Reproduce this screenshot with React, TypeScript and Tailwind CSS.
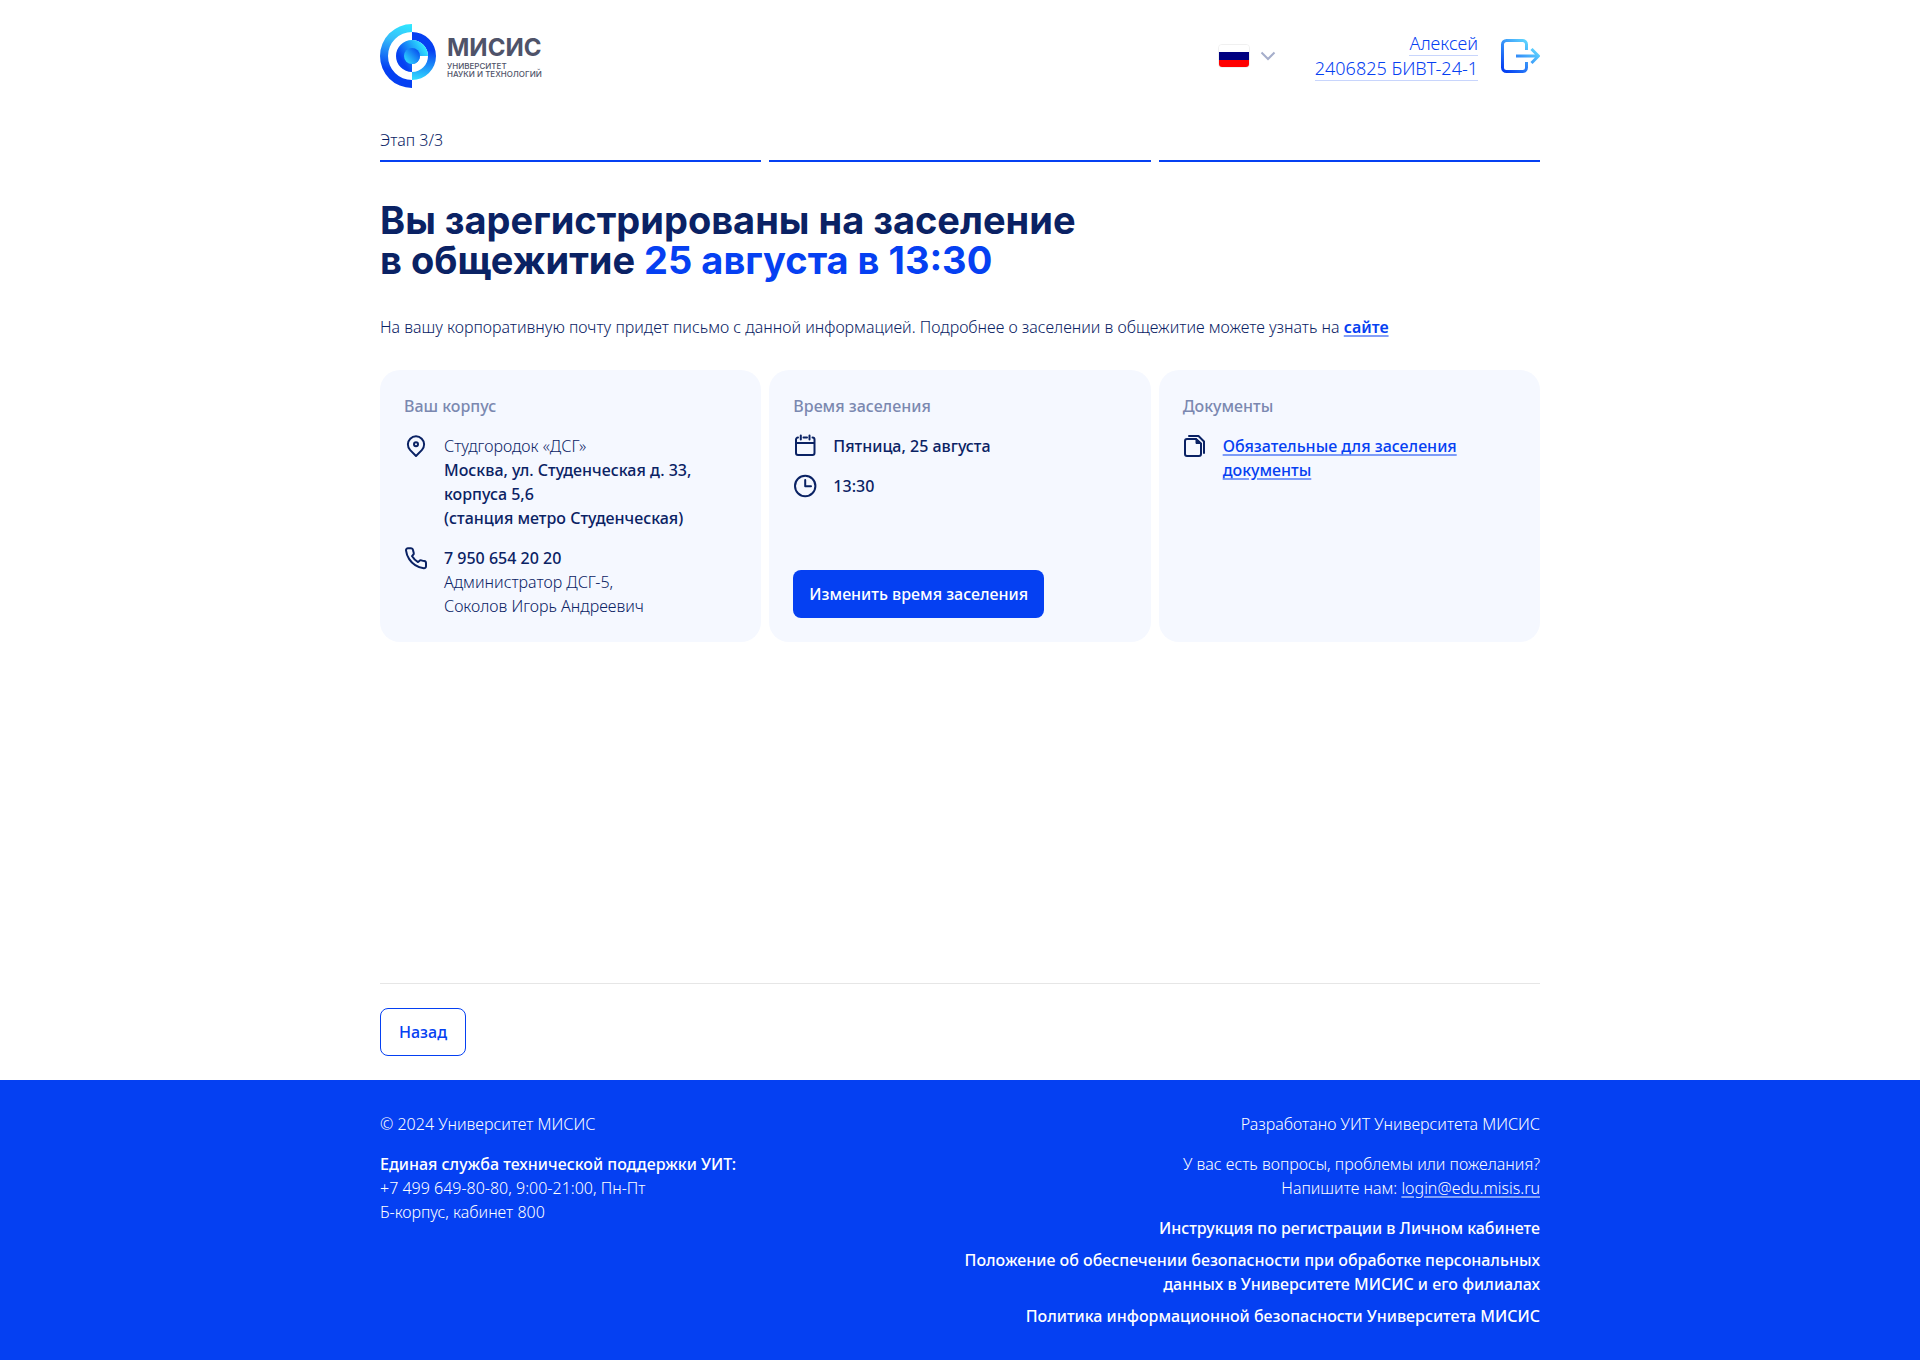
import type { ReactNode } from 'react';

function LogoMark() {
  return (
    <svg className="h-16 w-[56px] shrink-0" viewBox="0 0 56 64" fill="none" aria-hidden="true">
      <defs>
        <linearGradient id="outer" x1="32" y1="0" x2="14" y2="64" gradientUnits="userSpaceOnUse">
          <stop stopColor="#2FEAFF" />
          <stop offset="0.3" stopColor="#35BDFA" />
          <stop offset="0.75" stopColor="#0540F2" />
        </linearGradient>
        <linearGradient id="right" x1="44" y1="8" x2="36" y2="56" gradientUnits="userSpaceOnUse">
          <stop offset="0.35" stopColor="#0540F2" />
          <stop offset="1" stopColor="#33DDFF" />
        </linearGradient>
        <linearGradient id="inner" x1="46" y1="26" x2="20" y2="42" gradientUnits="userSpaceOnUse">
          <stop stopColor="#2FE3FF" />
          <stop offset="0.85" stopColor="#0540F2" />
        </linearGradient>
        <linearGradient id="core" x1="26" y1="38" x2="38" y2="27" gradientUnits="userSpaceOnUse">
          <stop stopColor="#2FD8FF" />
          <stop offset="1" stopColor="#0A55F0" />
        </linearGradient>
      </defs>
      <path d="M32 0a32 32 0 0 0 0 64v-8a24 24 0 0 1 0-48z" fill="url(#outer)" />
      <path d="M32 8a24 24 0 0 1 0 48v-8a16 16 0 0 0 0-32z" fill="url(#right)" />
      <path d="M32 48a16 16 0 1 1 16-16h-8a8 8 0 0 1-8 8z" fill="url(#inner)" />
      <circle cx="32" cy="32" r="8" fill="url(#core)" />
    </svg>
  );
}

function Icon({ children }: { children: ReactNode }) {
  return (
    <svg
      className="size-6 shrink-0"
      viewBox="0 0 24 24"
      fill="none"
      stroke="currentColor"
      strokeWidth="2"
      strokeLinecap="round"
      strokeLinejoin="round"
      aria-hidden="true"
    >
      {children}
    </svg>
  );
}

function PinIcon() {
  return (
    <Icon>
      <path d="M12 22 6.2 16.1a8.1 8.1 0 1 1 11.6 0z" />
      <circle cx="12" cy="10.3" r="2" />
    </Icon>
  );
}

function PhoneIcon() {
  return (
    <Icon>
      <path d="M22 17.2v3a2 2 0 0 1-2.2 2 19.8 19.8 0 0 1-8.6-3.1 19.5 19.5 0 0 1-6-6A19.8 19.8 0 0 1 2 4.4 2 2 0 0 1 4 2.2h3a2 2 0 0 1 2 1.7c.1 1 .4 1.9.7 2.8a2 2 0 0 1-.5 2.1L8 10.1a16 16 0 0 0 6 6l1.3-1.2a2 2 0 0 1 2.1-.5c.9.3 1.8.6 2.8.7a2 2 0 0 1 1.8 2.1z" />
    </Icon>
  );
}

function CalendarIcon() {
  return (
    <Icon>
      <path d="M5 3.500a2 2 0 0 0-2 2V19a2 2 0 0 0 2 2h14.500a2 2 0 0 0 2-2V5.500a2 2 0 0 0-2-2M10.500 3.500h3.500M7.800 1.500v4M16.500 1.500v4M3 9h18" />
    </Icon>
  );
}

function ClockIcon() {
  return (
    <Icon>
      <circle cx="12.200" cy="12" r="10.200" />
      <path d="M12.200 6v6.200H18" />
    </Icon>
  );
}

function DocumentsIcon() {
  return (
    <Icon>
      <path d="M13 5H4a2 2 0 0 0-2 2v13a2 2 0 0 0 2 2h12a2 2 0 0 0 2-2V9.500z" />
      <path d="M13 5v4.500h5z" fill="currentColor" strokeWidth="1" />
      <path d="M6 2h9.500L21 7.500V19" />
    </Icon>
  );
}

function LogoutIcon() {
  return (
    <svg className="size-10" viewBox="0 0 40 40" fill="none" aria-hidden="true">
      <defs>
        <linearGradient id="exit" x1="3" y1="33" x2="28" y2="4" gradientUnits="userSpaceOnUse">
          <stop stopColor="#0540F2" />
          <stop offset="1" stopColor="#63DCFF" />
        </linearGradient>
      </defs>
      <path
        d="M26.500 14V8.500a4 4 0 0 0-4-4H6.500a4 4 0 0 0-4 4v23a4 4 0 0 0 4 4h16a4 4 0 0 0 4-4V26M16 20h22M31.500 13l7 7-7 7"
        stroke="url(#exit)"
        strokeWidth="3"
      />
    </svg>
  );
}

function Header() {
  return (
    <header className="mx-auto flex w-full max-w-[1200px] items-center justify-between px-5 py-6">
      <a href="#" className="flex items-center gap-[11px]" aria-label="Университет МИСИС">
        <LogoMark />
        <span className="flex flex-col font-['Inter',sans-serif] text-[#4F5369]">
          <span className="text-2xl leading-7 font-bold">МИСИС</span>
          <span className="text-[8px] leading-2 font-medium">
            УНИВЕРСИТЕТ
            <br />
            НАУКИ И ТЕХНОЛОГИЙ
          </span>
        </span>
      </a>
      <div className="flex items-center">
        <button type="button" className="mr-[34px] flex items-center gap-2.5" aria-label="Язык: русский">
          <span className="flex h-6 w-8 flex-col overflow-hidden rounded border border-[#F0F0F0]">
            <span className="flex-1 bg-white" />
            <span className="flex-1 bg-[#000080]" />
            <span className="flex-1 bg-[#FF0000]" />
          </span>
          <svg className="h-4 w-4" viewBox="0 0 16 16" fill="none" stroke="#A5AECB" strokeWidth="2" aria-hidden="true">
            <path d="m1.500 4.500 6.500 6.500 6.500-6.500" />
          </svg>
        </button>
        <a href="#" className="mr-[22px] min-w-[168px] text-right text-lg leading-[25px] font-light text-[#0540F2]">
          <span className="border-b border-[#C8D5FC]">Алексей</span>
          <br />
          <span className="border-b border-[#C8D5FC]">2406825 БИВТ-24-1</span>
        </a>
        <button type="button" aria-label="Выйти">
          <LogoutIcon />
        </button>
      </div>
    </header>
  );
}

function Card({ title, children }: { title: string; children: ReactNode }) {
  return (
    <section className="flex flex-col gap-4 rounded-[20px] bg-[#F5F8FF] p-6">
      <h2 className="font-medium text-[#7B88B0]">{title}</h2>
      {children}
    </section>
  );
}

function Row({ icon, children }: { icon: ReactNode; children: ReactNode }) {
  return (
    <div className="flex gap-4">
      {icon}
      <div>{children}</div>
    </div>
  );
}

function Footer() {
  return (
    <footer className="bg-[#0540F2] text-white">
      <div className="mx-auto flex w-full max-w-[1200px] justify-between px-5 py-8 font-light">
        <div className="flex flex-col gap-4">
          <p>© 2024 Университет МИСИС</p>
          <div>
            <p className="font-medium">Единая служба технической поддержки УИТ:</p>
            <p>+7 499 649-80-80, 9:00-21:00, Пн-Пт</p>
            <p>Б-корпус, кабинет 800</p>
          </div>
        </div>
        <div className="flex max-w-[600px] flex-col gap-4 text-right">
          <p>Разработано УИТ Университета МИСИС</p>
          <div>
            <p>У вас есть вопросы, проблемы или пожелания?</p>
            <p>
              Напишите нам:{' '}
              <a
                href="mailto:login@edu.misis.ru"
                className="underline decoration-white/50 decoration-2 underline-offset-2"
              >
                login@edu.misis.ru
              </a>
            </p>
          </div>
          <nav className="flex flex-col gap-2 font-medium">
            <a href="#">Инструкция по регистрации в Личном кабинете</a>
            <a href="#">
              Положение об обеспечении безопасности при обработке персональных
              <br />
              данных в Университете МИСИС и его филиалах
            </a>
            <a href="#">Политика информационной безопасности Университета МИСИС</a>
          </nav>
        </div>
      </div>
    </footer>
  );
}

export default function App() {
  return (
    <div className="flex min-h-screen flex-col bg-white font-['Noto_Sans',sans-serif] text-base leading-6 text-[#0A2264]">
      <Header />
      <main className="mx-auto flex w-full max-w-[1200px] flex-1 flex-col px-5 pt-4 pb-6">
        <p className="font-light">Этап 3/3</p>
        <div className="mt-2 grid grid-cols-3 gap-2">
          <span className="h-0.5 bg-[#0540F2]" />
          <span className="h-0.5 bg-[#0540F2]" />
          <span className="h-0.5 bg-[#0540F2]" />
        </div>
        <h1 className="mt-[38px] font-['Inter',sans-serif] text-[38px] leading-10 font-bold">
          Вы зарегистрированы на заселение
          <br />в общежитие <span className="text-[#0540F2]">25 августа в 13:30</span>
        </h1>
        <p className="mt-[35px] font-light">
          На вашу корпоративную почту придет письмо с данной информацией. Подробнее о заселении в общежитие можете
          узнать на{' '}
          <a
            href="#"
            className="font-semibold text-[#0540F2] underline decoration-[#0540F2]/50 decoration-2 underline-offset-2"
          >
            сайте
          </a>
        </p>
        <div className="mt-[31px] grid grid-cols-3 gap-2">
          <Card title="Ваш корпус">
            <Row icon={<PinIcon />}>
              <p className="font-light">Студгородок «ДСГ»</p>
              <p className="font-medium">
                Москва, ул. Студенческая д. 33,
                <br />
                корпуса 5,6
                <br />
                (станция метро Студенческая)
              </p>
            </Row>
            <Row icon={<PhoneIcon />}>
              <p className="font-medium">7 950 654 20 20</p>
              <p className="font-light">
                Администратор ДСГ-5,
                <br />
                Соколов Игорь Андреевич
              </p>
            </Row>
          </Card>
          <Card title="Время заселения">
            <Row icon={<CalendarIcon />}>
              <p className="font-medium">Пятница, 25 августа</p>
            </Row>
            <Row icon={<ClockIcon />}>
              <p className="font-medium">13:30</p>
            </Row>
            <button
              type="button"
              className="mt-auto h-12 self-start rounded-lg bg-[#0540F2] px-4 font-medium text-white"
            >
              Изменить время заселения
            </button>
          </Card>
          <Card title="Документы">
            <Row icon={<DocumentsIcon />}>
              <a
                href="#"
                className="font-medium text-[#0540F2] underline decoration-[#0540F2]/50 decoration-2 underline-offset-2"
              >
                Обязательные для заселения
                <br />
                документы
              </a>
            </Row>
          </Card>
        </div>
        <div className="mt-auto border-t border-[#E6E6E6] pt-6">
          <button
            type="button"
            className="block h-12 rounded-lg border border-[#0540F2] px-[18px] font-medium text-[#0540F2]"
          >
            Назад
          </button>
        </div>
      </main>
      <Footer />
    </div>
  );
}
